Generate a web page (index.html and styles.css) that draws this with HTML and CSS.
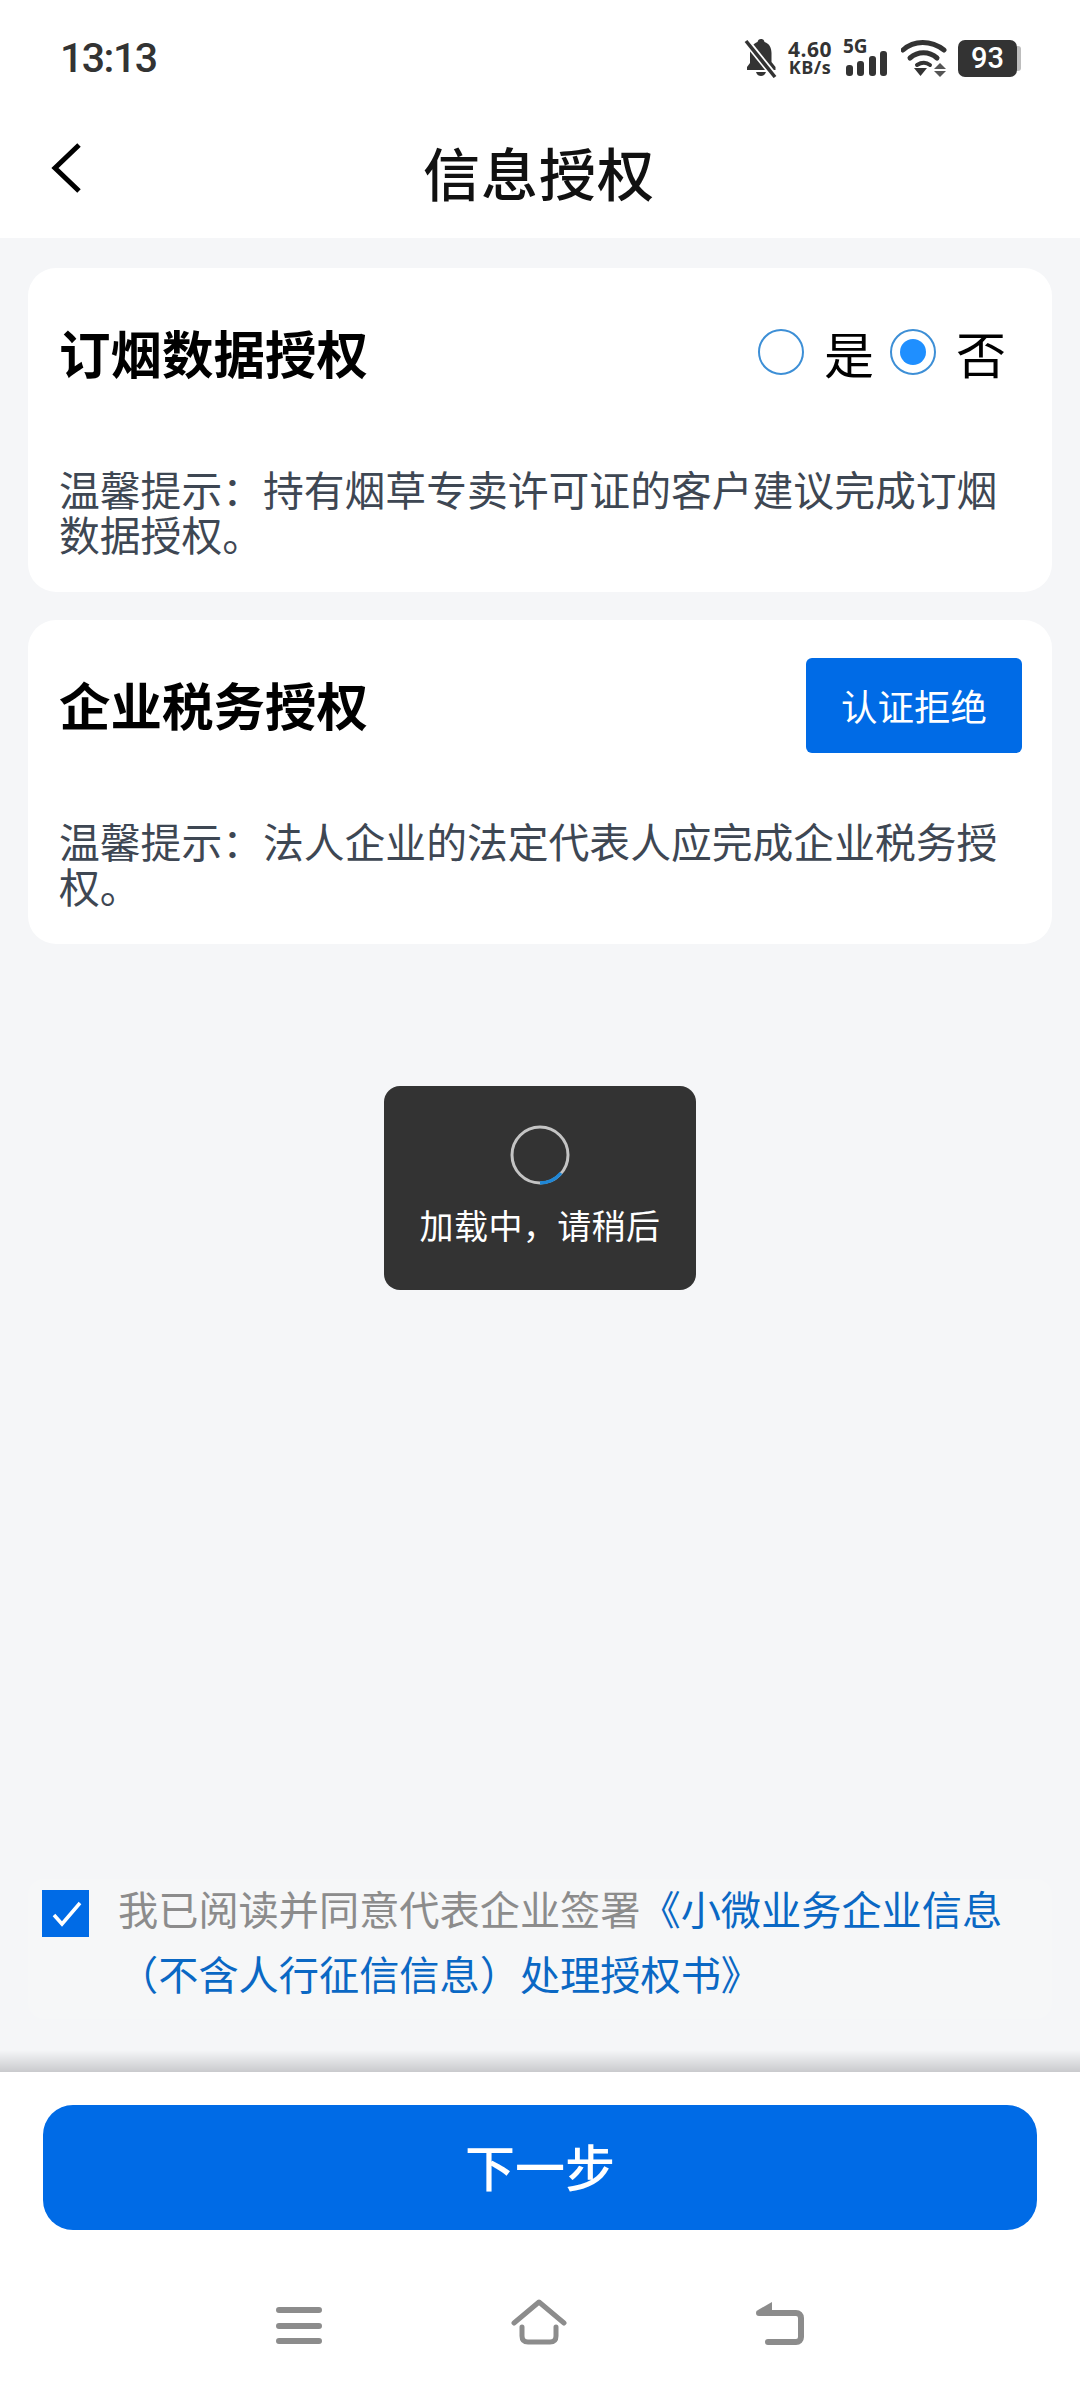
FILE: index.html
```html
<!DOCTYPE html>
<html lang="zh-CN">
<head>
  <meta charset="utf-8" />
  <title>信息授权</title>
  <link rel="stylesheet" href="styles.css">
</head>
<body>
<div class="page">
  <div class="statusBar">
    <span class="clock">13:13</span>
    <div class="statusIcons">
      <svg class="bell" width="34" height="40" viewBox="0 0 34 40">
        <path d="M17 1c2 0 3 1 3.500 3 5 1.500 7 6 7 11v9l4 5v3H3v-3l3-4V15c0-5 3-9.500 7.500-11C14 2 15 1 17 1z" fill="#333"/>
        <path d="M12 34h10c-1 3-3 4-5 4s-4-1-5-4z" fill="#333"/>
        <path d="M3 4l28 35" stroke="#fff" stroke-width="7"/>
        <path d="M2 3l29 36" stroke="#333" stroke-width="3.500"/>
      </svg>
      <div class="speed"><span>4.60</span><span class="speedUnit">KB/s</span></div>
      <div class="signal">
        <span class="netType">5G</span>
        <svg width="42" height="26" viewBox="0 0 42 26">
          <rect x="0" y="14" width="7" height="11" rx="3" fill="#333"/>
          <rect x="11" y="10" width="7" height="15" rx="3" fill="#333"/>
          <rect x="23" y="5" width="7" height="20" rx="3" fill="#333"/>
          <rect x="34" y="0" width="7" height="25" rx="3" fill="#333"/>
        </svg>
      </div>
      <svg class="wifi" width="46" height="38" viewBox="0 0 46 38">
        <path d="M2 11C13 1 30 1 43 11" fill="none" stroke="#333" stroke-width="5" stroke-linecap="round"/>
        <path d="M9 19c8-7 19-7 27 0" fill="none" stroke="#333" stroke-width="5" stroke-linecap="round"/>
        <path d="M16 26c5-3 9-3 13 0" fill="none" stroke="#333" stroke-width="4" stroke-linecap="round"/>
        <path d="M13 29h13l-6.500 8z" fill="#333"/>
        <path d="M39 24l6 6H33z" fill="#555"/>
        <path d="M33 32h12l-6 6z" fill="#555"/>
      </svg>
      <div class="battery"><span class="batteryBody">93</span><span class="batteryNub"></span></div>
    </div>
  </div>

  <div class="navBar">
    <svg class="backIcon" width="34" height="52" viewBox="0 0 34 52">
      <path d="M30 3L6 26l24 23" fill="none" stroke="#000" stroke-width="5"/>
    </svg>
    <h1>信息授权</h1>
  </div>

  <div class="content">
    <div class="card">
      <div class="cardHead">
        <h2>订烟数据授权</h2>
        <div class="radioGroup">
          <span class="radio"></span><span class="radioLabel">是</span>
          <span class="radio checked"></span><span class="radioLabel">否</span>
        </div>
      </div>
      <p class="tip">温馨提示：持有烟草专卖许可证的客户建议完成订烟数据授权。</p>
    </div>

    <div class="card">
      <div class="cardHead">
        <h2>企业税务授权</h2>
        <a class="authBtn">认证拒绝</a>
      </div>
      <p class="tip">温馨提示：法人企业的法定代表人应完成企业税务授权。</p>
    </div>

    <div class="agreement">
      <span class="checkbox">
        <svg width="47" height="47" viewBox="0 0 47 47">
          <path d="M12 25l8 9 18-21" fill="none" stroke="#fff" stroke-width="3.500"/>
        </svg>
      </span>
      <p>我已阅读并同意代表企业签署<a>《小微业务企业信息（不含人行征信信息）处理授权书》</a></p>
    </div>
  </div>

  <div class="footer">
    <a class="nextBtn">下一步</a>
    <div class="sysNav">
      <svg width="46" height="38" viewBox="0 0 46 38">
        <path d="M3 3h40M3 19h40M3 34h40" fill="none" stroke="#8c8c8c" stroke-width="6" stroke-linecap="round"/>
      </svg>
      <svg width="56" height="46" viewBox="0 0 56 46">
        <path d="M3 24L28 3l25 21" fill="none" stroke="#8c8c8c" stroke-width="5" stroke-linecap="round" stroke-linejoin="round"/>
        <path d="M11 28v9c0 4 2 6 6 6h22c4 0 6-2 6-6v-9" fill="none" stroke="#8c8c8c" stroke-width="5" stroke-linecap="round"/>
      </svg>
      <svg width="48" height="46" viewBox="0 0 48 46">
        <path d="M3 14h37c3 0 5 2 5 5v19c0 3-2 5-5 5H12" fill="none" stroke="#8c8c8c" stroke-width="6" stroke-linecap="round"/>
        <path d="M16 3L2 11l2 5 12-1z" fill="#8c8c8c"/>
      </svg>
    </div>
  </div>

  <div class="toast">
    <svg width="60" height="60" viewBox="0 0 60 60">
      <circle cx="30" cy="30" r="28" fill="none" stroke="#c4c4c4" stroke-width="3"/>
      <path d="M30 58A28 28 0 0 0 51 48" fill="none" stroke="#1f87d6" stroke-width="3.500"/>
    </svg>
    <span>加载中，请稍后</span>
  </div>
</div>
</body>
</html>
```

FILE: styles.css
```css
* { margin: 0; padding: 0; box-sizing: border-box; }
html, body { height: 100%; }
body { background: #f5f6f8; font-family: "Noto Sans CJK SC", "Noto Sans", sans-serif; color: #000; }
a { text-decoration: none; }

.page { position: relative; display: flex; flex-direction: column; height: 2388px; overflow: hidden; }

/* status bar */
.statusBar { display: flex; justify-content: space-between; align-items: center; height: 116px; padding: 0 59px 0 60px; background: #fff; }
.clock { font: 500 41px Roboto, sans-serif; letter-spacing: -1.500px; color: #333; }
.statusIcons { display: flex; align-items: center; gap: 11px; height: 40px; }
.speed { display: flex; flex-direction: column; align-items: center; width: 50px; margin: 0 -3px 0 -4px; font: 700 21px/19px "Open Sans", sans-serif; letter-spacing: 0.500px; color: #333; }
.speedUnit { font-size: 18px; line-height: 17px; }
.signal { position: relative; width: 42px; height: 38px; margin-left: 3px; margin-right: 2px; display: flex; align-items: flex-end; }
.netType { position: absolute; left: -3px; top: -3px; font: 700 19px/20px "Open Sans", sans-serif; color: #333; }
.battery { display: flex; align-items: center; }
.batteryBody { width: 59px; height: 37px; border-radius: 7px; background: #333; color: #fff; font: 500 29px/37px Roboto, sans-serif; text-align: center; }
.batteryNub { width: 4px; height: 25px; background: #bdbdbd; border-radius: 0 3px 3px 0; }

/* title */
.navBar { position: relative; display: flex; justify-content: center; align-items: center; height: 122px; padding: 0 2px 12px 0; background: #fff; }
.navBar h1 { font-size: 57px; font-weight: 500; line-height: 80px; letter-spacing: 1px; color: #111; }
.backIcon { position: absolute; left: 49px; top: 26px; }

.content { flex: 1; display: flex; flex-direction: column; padding: 30px 28px 0; gap: 28px; }

.card { height: 324px; padding: 0 30px 0 31px; background: #fff; border-radius: 28px; }
.cardHead { display: flex; justify-content: space-between; align-items: center; height: 134px; padding-top: 34px; margin-bottom: 64px; }
.cardHead h2 { font-size: 51.500px; font-weight: 700; line-height: 70px; }
.tip { width: 950px; font-size: 40.800px; line-height: 45px; color: #3e4753; }

.radioGroup { display: flex; align-items: center; margin-right: 18px; }
.radio { width: 46px; height: 46px; border: 2.500px solid #3d8fd6; border-radius: 50%; background: #fff; display: flex; align-items: center; justify-content: center; }
.radio.checked::after { content: ""; width: 26px; height: 26px; border-radius: 50%; background: #1f8fff; }
.radioLabel { width: 86px; padding-left: 20px; font-size: 50px; line-height: 60px; }
.radioLabel:last-child { width: 68px; }

.authBtn { display: flex; align-items: center; justify-content: center; width: 216px; height: 95px; margin-top: 3px; border-radius: 6px; background: #006be6; color: #fff; font-size: 36.500px; }

.agreement { display: flex; align-items: flex-start; gap: 29px; margin-top: auto; margin-bottom: 53px; height: 140px; padding: 0 14px; border-radius: 16px; background: #f6f7f8; font-size: 40.200px; line-height: 65px; color: #8c8c8c; }
.checkbox { flex: none; width: 47px; height: 47px; margin-top: 11px; background: #006be6; }
.checkbox svg { display: block; }
.agreement p { width: 900px; margin-top: -4px; }
.agreement a { color: #0a68c4; }

/* bottom */
.footer { position: relative; height: 316px; padding: 33px 43px 0; background: #fff; }
.footer::before { content: ""; position: absolute; left: 0; right: 0; top: -22px; height: 22px; background: linear-gradient(rgba(200,201,205,0), #c9cacd); }
.nextBtn { display: flex; align-items: center; justify-content: center; height: 125px; padding-bottom: 6px; border-radius: 30px; background: #006be6; color: #fff; font-size: 50px; font-weight: 500; }
.sysNav { display: flex; justify-content: space-between; align-items: flex-end; width: 528px; margin: 69px auto 0; }
.sysNav svg { display: block; }

/* loading */
.toast { position: absolute; left: 384px; top: 1086px; width: 312px; height: 204px; display: flex; flex-direction: column; align-items: center; padding-top: 39px; gap: 15px; background: #333; border-radius: 16px; color: #fff; font-size: 34px; line-height: 50px; letter-spacing: 0.400px; }
```
